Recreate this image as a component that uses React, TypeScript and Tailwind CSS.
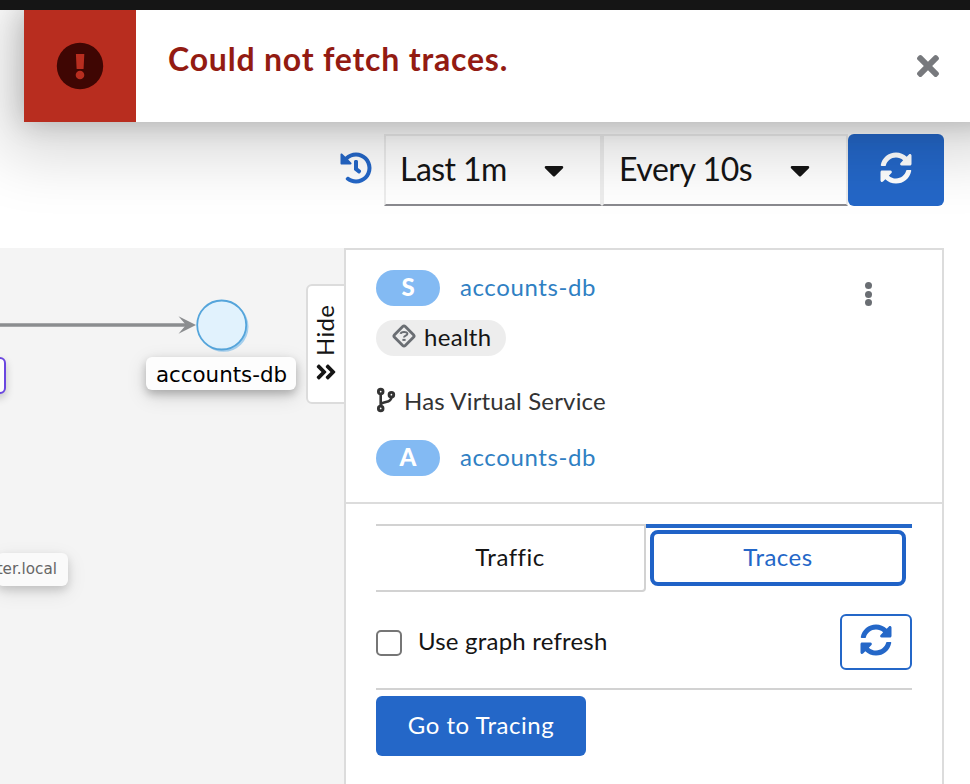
import { FaHistory, FaSyncAlt, FaCaretDown, FaTimes, FaAngleDoubleRight } from "react-icons/fa";

function TimeSelect({ label, className, tracking }: { label: string; className: string; tracking: string }) {
  return (
    <button className={`flex h-[72px] items-center justify-between border-2 border-[#ededed] border-b-[#8a8a8f] text-[32px] leading-none text-[#151515] ${className}`}>
      <span className={`whitespace-nowrap pb-[3px] ${tracking}`}>{label}</span>
      <FaCaretDown size={32} className="-mr-[6px]" />
    </button>
  );
}

function ResourceRow({ letter }: { letter: string }) {
  return (
    <div className="flex h-9 items-center gap-5">
      <span className="flex h-9 w-16 items-center justify-center rounded-full bg-[#83baf3] pb-[2px] text-[24px] font-black leading-none text-white">{letter}</span>
      <a className="pb-[2px] text-[24px] leading-none tracking-[0.6px] text-[#2f80c3]">accounts-db</a>
    </div>
  );
}

function Graph() {
  return (
    <section className="relative w-[344px] shrink-0 overflow-hidden bg-[#f4f4f4]">
      <svg className="absolute left-0 top-0" width="300" height="120" viewBox="0 248 300 120">
        <path d="M0 325H187" stroke="#8b8d8f" strokeWidth="3.6" />
        <path d="M178.500 316.300l17.500 8.700-17.500 8.700 7.500-8.700z" fill="#8b8d8f" />
        <circle cx="223.500" cy="326.800" r="25" fill="#a5cfed" />
        <circle cx="221.700" cy="325" r="24.500" fill="#e1f2fd" stroke="#55a5db" strokeWidth="1.800" />
      </svg>
      <div className="absolute left-[146px] top-[109px] flex h-[33px] w-[150px] items-center justify-center rounded-md bg-[#fdfdfd] pl-px pt-[2px] font-['DejaVu_Sans',sans-serif] text-[21.400px] leading-none text-black shadow-[0_4px_8px_rgba(0,0,0,0.22),0_6px_20px_rgba(0,0,0,0.15)]">accounts-db</div>
      <div className="absolute -left-10 top-[109px] h-[37px] w-[46px] rounded-md border-2 border-[#6a46e0] bg-[#fdfdfd] shadow-[0_4px_8px_rgba(0,0,0,0.2)]" />
      <div className="absolute right-[276px] top-[305px] flex h-[33px] items-center rounded-md bg-[#fafafa] pr-[11px] font-['DejaVu_Sans',sans-serif] text-[15.200px] leading-none text-[#666] shadow-[0_4px_8px_rgba(0,0,0,0.14),0_6px_20px_rgba(0,0,0,0.1)]">ter.local</div>
      <button className="absolute left-[306px] top-9 flex h-[120px] w-10 flex-col items-center rounded-l-md border-2 border-[#dcdcdc] bg-white pt-5">
        <span className="-ml-[2px] h-[50px] rotate-180 text-[24px] leading-[30px] tracking-[0.3px] text-[#151515] [writing-mode:vertical-rl]">Hide</span>
        <FaAngleDoubleRight className="mt-[4px]" size={24} color="#151515" />
      </button>
    </section>
  );
}

function SidePanel() {
  return (
    <aside className="w-[600px] shrink-0 border-2 border-b-0 border-[#dcdcdc] bg-white">
      <div className="relative h-[254px] border-b-2 border-[#dcdcdc] px-[30px] pt-5">
        <ResourceRow letter="S" />
        <div className="mt-[14px] flex h-9 w-[130px] items-center rounded-full bg-[#ededed] pl-4">
          <svg className="mb-[4px]" width="24" height="24" viewBox="0 0 24 24" fill="none" stroke="#6a6e73">
            <rect x="4.400" y="4.400" width="15.200" height="15.200" rx="1.800" transform="rotate(45 12 12)" strokeWidth="2.800" />
            <path d="M8.600 9.900C8.800 7.200 15.400 7.300 15.400 9.700c0 2-3.400 1.700-3.400 3.700" strokeWidth="2" />
            <path d="M10.400 15.900h3.200" strokeWidth="2" />
          </svg>
          <span className="ml-2 pb-[2px] text-[24px] leading-none tracking-[0.300px] text-[#151515]">health</span>
        </div>
        <div className="mt-[29px] flex h-9 items-center text-[#333]">
          <svg className="mb-[6px]" width="20" height="26" viewBox="0 0 20 26" fill="none" stroke="currentColor" strokeWidth="2.900">
            <circle cx="4.700" cy="4.600" r="2.300" />
            <circle cx="4.700" cy="21.400" r="2.300" />
            <circle cx="15.400" cy="7.700" r="2.300" />
            <path d="M4.700 7v12M15.400 10.200c0 6-7.400 3.700-10.500 7" strokeWidth="2.600" />
          </svg>
          <span className="ml-2 pb-[4px] text-[24px] leading-none tracking-[0.180px]">Has Virtual Service</span>
        </div>
        <div className="mt-[19px]">
          <ResourceRow letter="A" />
        </div>
        <div className="absolute right-[70.500px] top-8 flex flex-col gap-[1.500px]">
          <span className="size-[7px] rounded-full bg-[#6a6e73]" />
          <span className="size-[7px] rounded-full bg-[#6a6e73]" />
          <span className="size-[7px] rounded-full bg-[#6a6e73]" />
        </div>
      </div>
      <div className="px-[30px] pt-5 text-[24px] leading-none text-[#151515]">
        <div className="flex h-[68px]">
          <button className="flex w-[270px] items-center justify-center rounded-br border-y-2 border-r-2 border-[#d2d2d2] pb-[2px] tracking-[0.500px]">Traffic</button>
          <button className="flex-1 border-t-4 border-[#2467c8] pb-[6px] pl-1 pr-[6px] pt-[2px] text-[#2467c8]">
            <span className="flex h-full items-center justify-center rounded-lg border-4 border-[#1f62c7] pb-[2px] tracking-[0.500px]">Traces</span>
          </button>
        </div>
        <div className="mt-[22px] flex h-14 items-center">
          <span className="mt-[2px] size-[26px] rounded-[5px] border-2 border-[#767676] bg-white" />
          <span className="ml-4 pb-[2px] tracking-[0.200px]">Use graph refresh</span>
          <button className="ml-auto flex h-14 w-[72px] items-center justify-center rounded-md border-2 border-[#2467c8] pb-1">
            <FaSyncAlt size={32} color="#2467c8" />
          </button>
        </div>
        <div className="mt-[18px] border-t-2 border-[#d2d2d2] pt-[6px]">
          <button className="flex h-[60px] w-[210px] items-center justify-center rounded-md bg-[#2467c8] pb-[2px] tracking-[0.500px] text-white">Go to Tracing</button>
        </div>
      </div>
    </aside>
  );
}

export default function App() {
  return (
    <div className="relative flex h-[784px] w-[970px] flex-col overflow-hidden bg-white font-[Lato,sans-serif]">
      <header className="relative z-20 h-[10px] shrink-0 bg-[#151515]" />
      <div className="absolute left-6 top-[10px] z-10 flex h-28 w-[970px] bg-white shadow-[0_10px_64px_22px_rgba(3,3,3,0.16),0_0_26px_rgba(3,3,3,0.21)]">
        <div className="flex w-28 items-center justify-center bg-[#b82d1f]">
          <svg width="48" height="48" viewBox="0 0 48 48">
            <circle cx="24" cy="24" r="23.200" fill="#3f0603" />
            <path d="M20.300 12h7.700c.2 0 .3.100.3.300l-.700 14.200c0 .4-.2.500-.5.500h-6c-.3 0-.5-.1-.5-.5l-.7-14.200c0-.2.100-.3.400-.3z" fill="#b82d1f" />
            <circle cx="24" cy="33" r="4.300" fill="#b82d1f" />
          </svg>
        </div>
        <h4 className="ml-8 mt-[31px] whitespace-nowrap text-[32px] font-bold leading-9 tracking-[0.800px] text-[#931b12]">Could not fetch traces.</h4>
        <FaTimes className="ml-auto mr-[50px] mt-10" size={32} color="#77797d" />
      </div>
      <div className="flex h-[238px] shrink-0 items-start justify-end pr-[26px] pt-[124px]">
        <FaHistory className="mr-3 mt-[18px]" size={32} color="#2467c8" />
        <TimeSelect label="Last 1m" className="w-[218px] pl-[14px] pr-[36px]" tracking="tracking-[-0.550px]" />
        <TimeSelect label="Every 10s" className="w-[246px] pl-[15px] pr-[36px]" tracking="tracking-[-0.450px]" />
        <button className="flex h-[72px] w-24 items-center justify-center rounded-md bg-[#2467c8] pb-1">
          <FaSyncAlt size={32} color="white" />
        </button>
      </div>
      <main className="flex min-h-0 flex-1">
        <Graph />
        <SidePanel />
      </main>
    </div>
  );
}
